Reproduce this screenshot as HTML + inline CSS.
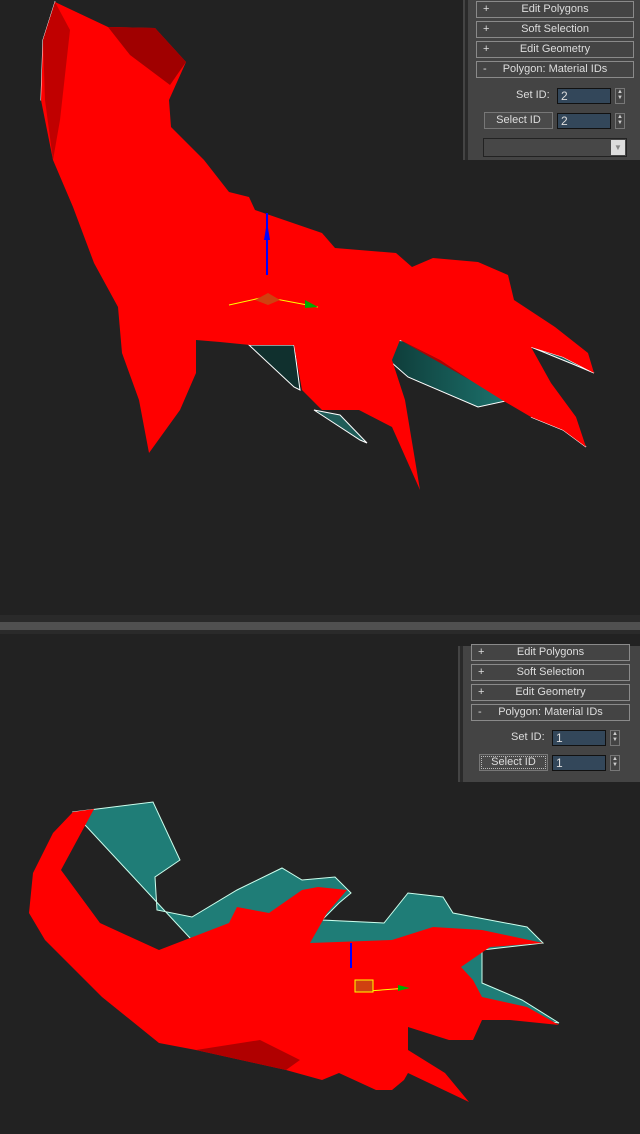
<!DOCTYPE html>
<html><head><meta charset="utf-8"><style>
body{margin:0;width:640px;height:1134px;background:#222;overflow:hidden;position:relative;font-family:"Liberation Sans",sans-serif}
.p{position:absolute;background:#444;}
.bar{position:absolute;height:15px;border:1px solid #8a8a8a;background:#444;color:#ddd;font-size:11px;line-height:15px;text-align:center}
.bar b{position:absolute;left:6px;font-weight:normal}
.fld{position:absolute;background:#33475a;border:1px solid #111;color:#ddd;font-size:12px;line-height:14px;padding-left:3px;box-sizing:border-box}
.lbl{position:absolute;color:#ddd;font-size:11px}
.btn{position:absolute;border:1px solid #777;background:#4a4a4a;color:#ddd;font-size:11px;text-align:center;box-sizing:border-box;line-height:15px}
.sp{position:absolute;width:10px;height:16px;border:1px solid #777;box-sizing:border-box;color:#ccc;font-size:6px;line-height:6px;text-align:center}
</style></head><body>
<svg width="640" height="1134" style="position:absolute;left:0;top:0">
<defs>
<linearGradient id="tl" x1="0" y1="0" x2="1" y2="0"><stop offset="0" stop-color="#0a2a28"/><stop offset="1" stop-color="#1f7d77"/></linearGradient>
</defs>
<polygon fill="url(#tl)" stroke="#fff" stroke-width="1" points="351,327 388,340 531,347 510,400 478,407 408,377" />
<polygon fill="#10302e" stroke="#fff" stroke-width="1" points="249,345 294,345 300,390 294,387" />
<polygon fill="#1f5c58" stroke="#fff" stroke-width="1" points="314,410 340,415 367,443 360,440" />
<polygon fill="#1f5c58" stroke="#fff" stroke-width="1" points="531,347 575,365 594,373 563,357" />
<polygon fill="#1f5c58" stroke="#fff" stroke-width="1" points="531,417 570,425 586,447 563,430" />
<polygon fill="#1f5c58" stroke="#fff" stroke-width="1" points="43,40 55,2 60,10 48,100 41,100" />
<polygon fill="#ff0000" points="55,2 108,27 155,28 186,62 169,100 171,127 204,160 229,192 249,197 255,210 322,233 335,248 396,253 412,267 433,258 478,262 508,275 514,300 555,327 588,353 594,373 563,357 531,347 551,383 576,417 586,447 563,430 531,417 502,400 470,380 440,360 400,340 392,360 405,400 420,490 392,427 359,410 322,410 302,390 294,345 250,345 220,342 196,340 196,373 180,410 149,453 139,400 122,353 118,307 94,263 73,207 53,160 41,100 43,40" />
<polygon fill="#a00000" points="108,27 155,28 186,62 170,85 130,55" />
<polygon fill="#c00000" points="43,40 55,2 70,30 60,120 53,160 45,100" />
<polygon fill="#b00000" points="400,340 470,380 440,360" />
<line x1="267" y1="213" x2="267" y2="275" stroke="#00f" stroke-width="2"/>
<polygon fill="#00f" points="264,240 270,240 267,222"/>
<polyline fill="none" stroke="#ff0" stroke-width="1" points="229,305 265,297 318,307"/>
<polygon fill="#d04010" points="255,300 268,293 280,300 268,305"/>
<polygon fill="#0a0" points="305,300 318,307 305,308"/>
<polygon fill="#1f7d77" stroke="#cfe" stroke-width="1" points="73,812 153,802 180,860 155,877 157,910 192,917 237,890 282,868 302,880 335,877 351,893 339,903 322,920 384,923 408,893 443,897 453,913 527,927 543,943 482,950 482,983 522,1000 559,1023 470,1010 400,1000 229,980" />
<polygon fill="#ff0000" points="73,812 94,809 61,870 100,923 159,950 229,923 237,907 269,913 302,890 318,887 347,890 327,913 310,943 392,940 433,927 482,930 543,943 490,947 461,967 473,980 482,997 527,1007 559,1025 510,1020 482,1020 473,1040 449,1040 408,1027 408,1050 445,1073 469,1102 408,1073 404,1080 392,1090 376,1090 339,1073 322,1080 286,1070 196,1050 159,1043 102,997 45,940 29,913 33,873 53,833" />
<polygon fill="#b00000" points="196,1050 260,1040 300,1060 286,1070" />
<line x1="351" y1="943" x2="351" y2="968" stroke="#00f" stroke-width="2"/>
<polyline fill="none" stroke="#ff0" stroke-width="1" points="355,992 408,988"/>
<rect x="355" y="980" width="18" height="12" fill="#d04010" stroke="#ff0" stroke-width="1"/>
<polygon fill="#0a0" points="398,985 410,988 398,991"/>
<rect x="0" y="615" width="640" height="7" fill="#2a2a2a"/>
<rect x="0" y="622" width="640" height="8" fill="#505050"/>
<rect x="0" y="630" width="640" height="4" fill="#2a2a2a"/>
</svg>
<div class="p" style="left:463px;top:0;width:177px;height:160px"></div>
<div style="position:absolute;left:465px;top:0;width:3px;height:160px;background:#2a2a2a"></div>
<div class="bar" style="left:476px;top:1px;width:156px"><b>+</b>Edit Polygons</div>
<div class="bar" style="left:476px;top:21px;width:156px"><b>+</b>Soft Selection</div>
<div class="bar" style="left:476px;top:41px;width:156px"><b>+</b>Edit Geometry</div>
<div class="bar" style="left:476px;top:61px;width:156px"><b>-</b>Polygon: Material IDs</div>
<div class="lbl" style="left:516px;top:89px">Set ID:</div>
<div class="fld" style="left:557px;top:88px;width:54px;height:16px">2</div>
<div class="sp" style="left:615px;top:88px">▲<br>▼</div>
<div class="btn" style="left:484px;top:112px;width:69px;height:17px">Select ID</div>
<div class="fld" style="left:557px;top:113px;width:54px;height:16px">2</div>
<div class="sp" style="left:615px;top:113px">▲<br>▼</div>
<div style="position:absolute;left:483px;top:138px;width:144px;height:19px;border:1px solid #222;background:#474747;box-sizing:border-box"></div>
<div style="position:absolute;left:611px;top:140px;width:14px;height:15px;background:#ddd;color:#888;font-size:8px;text-align:center;line-height:15px">▼</div>
<div class="p" style="left:458px;top:646px;width:182px;height:136px"></div>
<div style="position:absolute;left:460px;top:646px;width:3px;height:136px;background:#2a2a2a"></div>
<div class="bar" style="left:471px;top:644px;width:157px"><b>+</b>Edit Polygons</div>
<div class="bar" style="left:471px;top:664px;width:157px"><b>+</b>Soft Selection</div>
<div class="bar" style="left:471px;top:684px;width:157px"><b>+</b>Edit Geometry</div>
<div class="bar" style="left:471px;top:704px;width:157px"><b>-</b>Polygon: Material IDs</div>
<div class="lbl" style="left:511px;top:731px">Set ID:</div>
<div class="fld" style="left:552px;top:730px;width:54px;height:16px">1</div>
<div class="sp" style="left:610px;top:730px">▲<br>▼</div>
<div class="btn" style="left:479px;top:754px;width:69px;height:17px;outline:1px dotted #bbb;outline-offset:-3px">Select ID</div>
<div class="fld" style="left:552px;top:755px;width:54px;height:16px">1</div>
<div class="sp" style="left:610px;top:755px">▲<br>▼</div>
</body></html>
